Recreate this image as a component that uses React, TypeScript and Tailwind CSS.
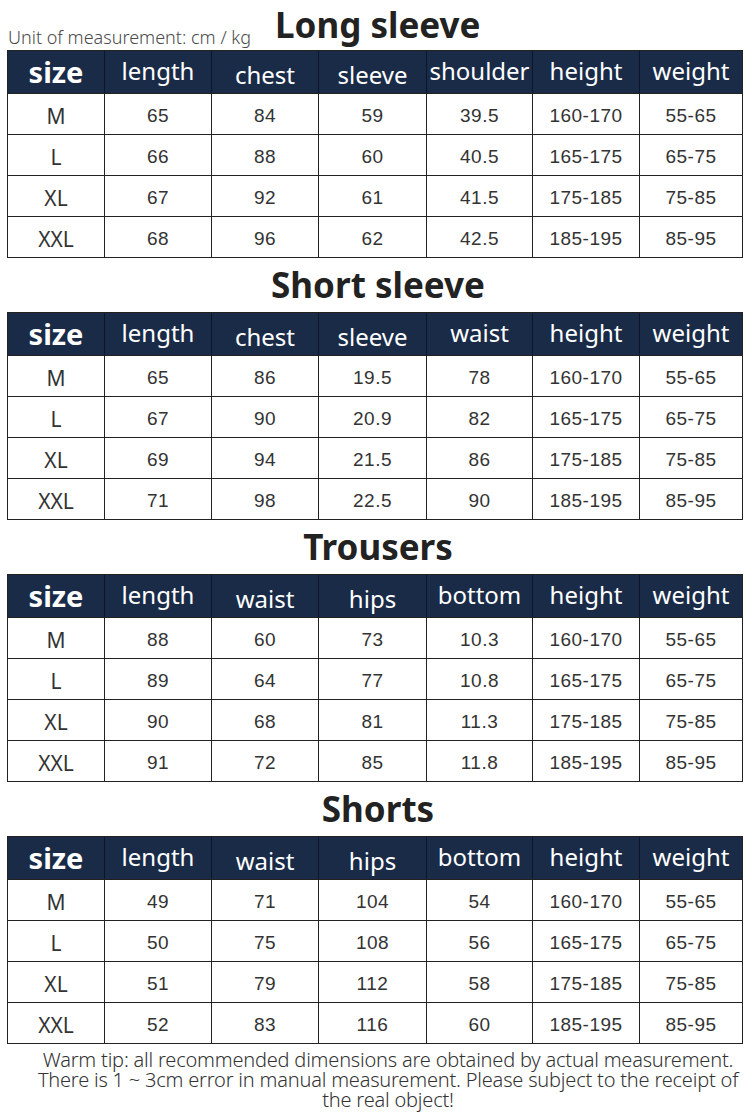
const cols = "grid-cols-[96px_107px_107px_108px_106px_107px_103px]"

type Table = {
  title: string
  heads: string[]
  rows: string[][]
}

const tables: Table[] = [
  {
    title: "Long sleeve",
    heads: ["length", "chest", "sleeve", "shoulder", "height", "weight"],
    rows: [
      ["M", "65", "84", "59", "39.5", "160-170", "55-65"],
      ["L", "66", "88", "60", "40.5", "165-175", "65-75"],
      ["XL", "67", "92", "61", "41.5", "175-185", "75-85"],
      ["XXL", "68", "96", "62", "42.5", "185-195", "85-95"],
    ],
  },
  {
    title: "Short sleeve",
    heads: ["length", "chest", "sleeve", "waist", "height", "weight"],
    rows: [
      ["M", "65", "86", "19.5", "78", "160-170", "55-65"],
      ["L", "67", "90", "20.9", "82", "165-175", "65-75"],
      ["XL", "69", "94", "21.5", "86", "175-185", "75-85"],
      ["XXL", "71", "98", "22.5", "90", "185-195", "85-95"],
    ],
  },
  {
    title: "Trousers",
    heads: ["length", "waist", "hips", "bottom", "height", "weight"],
    rows: [
      ["M", "88", "60", "73", "10.3", "160-170", "55-65"],
      ["L", "89", "64", "77", "10.8", "165-175", "65-75"],
      ["XL", "90", "68", "81", "11.3", "175-185", "75-85"],
      ["XXL", "91", "72", "85", "11.8", "185-195", "85-95"],
    ],
  },
  {
    title: "Shorts",
    heads: ["length", "waist", "hips", "bottom", "height", "weight"],
    rows: [
      ["M", "49", "71", "104", "54", "160-170", "55-65"],
      ["L", "50", "75", "108", "56", "165-175", "65-75"],
      ["XL", "51", "79", "112", "58", "175-185", "75-85"],
      ["XXL", "52", "83", "116", "60", "185-195", "85-95"],
    ],
  },
]

function SizeTable({ t }: { t: Table }) {
  return (
    <div className="mx-[7px] w-[736px] border border-[#222]">
      <div className={`grid ${cols} h-[42px] bg-[#1a2b48] text-white font-['Noto_Sans',sans-serif]`}>
        <div className="flex items-center justify-center text-[29px] font-bold leading-none pb-[2px]">size</div>
        {t.heads.map((h, i) => (
          <div
            key={h}
            className={`flex items-center justify-center border-l border-[#0d1628] text-[24px] leading-none ${
              i === 1 || i === 2 ? "pt-[6px]" : "pb-[2px]"
            }`}
          >
            {h}
          </div>
        ))}
      </div>
      {t.rows.map((r) => (
        <div key={r[0]} className={`grid ${cols} h-[41px] border-t border-[#222] bg-white text-[#333]`}>
          {r.map((c, i) => (
            <div
              key={i}
              className={
                i === 0
                  ? "flex items-center justify-center pt-[5px] font-['Noto_Sans',sans-serif] text-[21px]"
                  : "flex items-center justify-center border-l border-[#222] pt-[5px] font-['Liberation_Sans',Arial,sans-serif] text-[19px] tracking-[0.5px]"
              }
            >
              {c}
            </div>
          ))}
        </div>
      ))}
    </div>
  )
}

export default function App() {
  return (
    <div className="w-[750px] h-[1120px] bg-white overflow-hidden">
      {tables.map((t, idx) => (
        <div key={t.title}>
          {idx === 0 ? (
            <div className="grid grid-cols-[1fr_auto_1fr] items-end h-[50px]">
              <div className="pl-[8px] pb-[4px] text-[18px] leading-none text-[#4a4a4a] font-light font-['Noto_Sans',sans-serif] whitespace-nowrap">
                Unit of measurement: cm / kg
              </div>
              <h2 className="px-[24px] text-[35px] leading-[50px] font-bold text-[#222] font-['Noto_Sans',sans-serif]">
                {t.title}
              </h2>
              <div />
            </div>
          ) : (
            <h2 className="h-[54px] text-center text-[35px] leading-[54px] font-bold text-[#222] font-['Noto_Sans',sans-serif] pl-[6px]">
              {t.title}
            </h2>
          )}
          <SizeTable t={t} />
        </div>
      ))}
      <div className="flex flex-col items-center pl-[26px] pt-[6px] text-[20px] leading-[20px] text-[#333] font-light font-['Noto_Sans',sans-serif] tracking-[-0.2px] whitespace-nowrap">
        <p>Warm tip: all recommended dimensions are obtained by actual measurement.</p>
        <p>There is 1 ~ 3cm error in manual measurement. Please subject to the receipt of</p>
        <p>the real object!</p>
      </div>
    </div>
  )
}
